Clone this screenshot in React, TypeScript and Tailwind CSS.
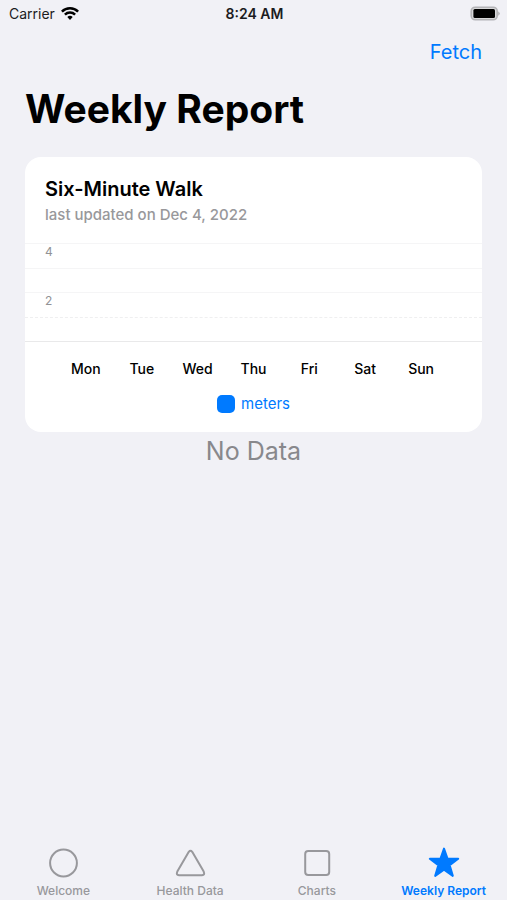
import React, { useState } from "react";

type Tab = {
  name: string;
  icon: React.ReactNode;
};

const days = ["Mon", "Tue", "Wed", "Thu", "Fri", "Sat", "Sun"];

const gridRows = [
  { label: "4", line: "border-solid border-[#f5f5f6]" },
  { label: "", line: "border-solid border-[#f5f5f6]" },
  { label: "2", line: "border-solid border-[#f5f5f6]" },
  { label: "", line: "border-dashed border-[#efeff0]" },
];

const tabs: Tab[] = [
  {
    name: "Welcome",
    icon: <circle cx="16.5" cy="16" r="13.4" fill="none" stroke="currentColor" strokeWidth="2" />,
  },
  {
    name: "Health Data",
    icon: (
      <path
        d="M14.8 4.8 3.3 24.6Q1.8 28 5 28.2H28Q31.2 28 29.7 24.6L18.2 4.8Q16.5 2.6 14.8 4.8Z"
        fill="none"
        stroke="currentColor"
        strokeWidth="2"
        strokeLinejoin="round"
      />
    ),
  },
  {
    name: "Charts",
    icon: (
      <rect x="4.2" y="4" width="24" height="24" rx="3" fill="none" stroke="currentColor" strokeWidth="2" />
    ),
  },
  {
    name: "Weekly Report",
    icon: (
      <path
        d="M16 1.6 19.5 11.6 30.2 11.8 21.7 18.3 24.8 28.9 16 22.7 7.2 28.9 10.3 18.3 1.8 11.8 12.5 11.6Z"
        fill="currentColor"
        stroke="currentColor"
        strokeWidth="2"
        strokeLinejoin="round"
      />
    ),
  },
];

const StatusBar = () => {
  return (
    <div className="grid grid-cols-3 items-center h-7 pl-[9px] pr-[7px] text-[#1c1c1e]">
      <div className="flex items-center gap-1.5 text-sm">
        <span>Carrier</span>
        <svg className="text-black" width="18" height="14" viewBox="0 0 18 14" fill="none" stroke="currentColor" strokeWidth="2.5" aria-hidden="true">
          <path d="M.9 4.6A11.6 11.6 0 0 1 17.1 4.6" />
          <path d="M3.9 7.7A7.3 7.3 0 0 1 14.1 7.7" />
          <path d="M6.3 10.1A3.9 3.9 0 0 1 11.7 10.1L9 12.9Z" fill="currentColor" stroke="none" />
        </svg>
      </div>
      <p className="text-center text-sm font-semibold">8:24 AM</p>
      <svg className="justify-self-end" width="30" height="16" viewBox="0 0 30 16" aria-hidden="true">
        <rect x="1.2" y="1.2" width="26" height="12.6" rx="4" fill="#d8d8da" stroke="#b4b4b7" strokeWidth="1.6" />
        <rect x="3.4" y="3" width="21.6" height="9" rx="1.5" fill="#000" />
        <path d="M28.3 5.2Q31 7.5 28.3 9.8Z" fill="#a6a6a9" />
      </svg>
    </div>
  );
};

const WalkCard = () => {
  return (
    <section className="bg-white rounded-2xl pt-5 pb-4">
      <div className="px-5">
        <h2 className="text-xl leading-6 font-semibold text-black">Six-Minute Walk</h2>
        <p className="text-[15px] leading-5 mt-1 font-medium text-[#98989b]">last updated on Dec 4, 2022</p>
      </div>
      <div className="mt-[18px] h-[99px] grid grid-rows-4 border-b border-[#e9e9ea]">
        {gridRows.map((row, index) => (
          <div key={index} className={`border-t px-5 text-xs leading-4 text-[#929295] ${row.line}`}>
            {row.label}
          </div>
        ))}
      </div>
      <ul className="mt-[15px] px-[33px] grid grid-cols-7 text-center text-sm leading-6 font-medium text-black">
        {days.map((day) => (
          <li key={day}>{day}</li>
        ))}
      </ul>
      <div className="mt-[11px] flex items-center justify-center gap-1.5 text-[15px] leading-6 text-[#007aff]">
        <span className="size-[18px] rounded-[5px] bg-[#007aff]" />
        <span>meters</span>
      </div>
    </section>
  );
};

const App = () => {
  const [activeTab, setActiveTab] = useState<string>("Weekly Report");

  return (
    <div className="min-h-screen flex flex-col bg-[#f1f1f6] font-['Inter','Liberation_Sans',sans-serif]">
      <StatusBar />
      <header className="px-[25px]">
        <div className="flex justify-end h-12 items-center">
          <button type="button" className="text-xl text-[#007aff]">
            Fetch
          </button>
        </div>
        <h1 className="text-[39px] leading-[48px] mt-[9px] font-bold text-black">Weekly Report</h1>
      </header>
      <main className="grow px-[25px] pt-6">
        <WalkCard />
        <p className="mt-[3px] text-center text-[25px] leading-8 text-[#88888c]">No Data</p>
      </main>
      <nav className="grid grid-cols-4 pb-px">
        {tabs.map((tab) => (
          <button
            key={tab.name}
            type="button"
            onClick={() => setActiveTab(tab.name)}
            className={`flex flex-col items-center gap-1 ${
              tab.name === activeTab ? "text-[#007aff] font-semibold" : "text-[#98989c] font-medium"
            }`}
          >
            <svg width="32" height="32" viewBox="0 0 32 32" aria-hidden="true">
              {tab.icon}
            </svg>
            <span className="text-xs leading-4">{tab.name}</span>
          </button>
        ))}
      </nav>
    </div>
  );
};

export default App;
